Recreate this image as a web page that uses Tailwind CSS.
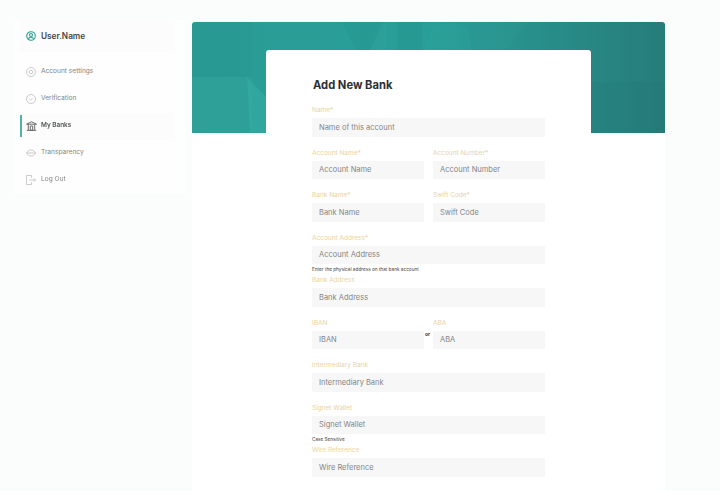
<!DOCTYPE html>
<html lang="en">
<head>
<meta charset="utf-8">
<script src="https://cdn.jsdelivr.net/npm/@tailwindcss/browser@4"></script>
</head>
<body class="m-0 bg-[#fbfcfc]">
<div class="w-[720px] h-[491px] overflow-hidden flex items-start font-['Inter','Liberation_Sans',sans-serif] blur-[0.5px]">
  <aside class="ml-[15px] mt-[20px] w-[170px] h-[175px] bg-[#fefefe] shrink-0 flex flex-col">
    <div class="h-[32px] shrink-0 ml-[5px] mr-[10px] pl-[6px] flex items-center gap-[5px] bg-[#fcfcfc] text-[8.250px] font-semibold text-[#45484b]">
      <svg class="w-[10px] h-[10px]" viewBox="0 0 10 10" fill="none" stroke="#2b9d92" stroke-width="1.100"><circle cx="5" cy="5" r="4.300"/><circle cx="5" cy="4" r="1.500"/><path d="M2.400 8c.5-1.300 1.500-1.800 2.600-1.800S7.100 6.700 7.600 8"/></svg>
      <span>User.Name</span>
    </div>
    <nav class="mt-[6.500px] flex flex-col shrink-0 text-[6.600px] text-[#858585]">
      <a class="h-[27px] pl-[11px] flex items-center gap-[5px]">
        <svg class="w-[10px] h-[10px]" viewBox="0 0 10 10" fill="none" stroke="#b5b5b5" stroke-width=".7"><circle cx="5" cy="5" r="4.500"/><circle cx="5" cy="5" r="1.800"/></svg>
        <span>Account settings</span>
      </a>
      <a class="h-[27px] pl-[11px] flex items-center gap-[5px]">
        <svg class="w-[10px] h-[10px]" viewBox="0 0 10 10" fill="none" stroke="#b5b5b5" stroke-width=".7"><circle cx="5" cy="5" r="4.500"/><path d="M3.400 5l1.200 1.200 2-2.200"/></svg>
        <span>Verification</span>
      </a>
      <a class="relative h-[27px] ml-[5px] mr-[10px] pl-[6px] flex items-center gap-[4px] bg-[#fcfcfc] text-[6.400px] font-semibold text-[#505254]">
        <span class="absolute left-0 top-[2.500px] w-[1.500px] h-[22px] bg-[#4db3a9]"></span>
        <svg class="w-[11px] h-[10px]" viewBox="0 0 11 10" fill="none" stroke="#5a5c5e" stroke-width=".9"><path d="M.5 3.200 5.500.8l5 2.400zM.8 9.400h9.400M2.300 3.500v5.500M8.700 3.500v5.500M4.300 5h2.400v4.200H4.300z"/></svg>
        <span>My Banks</span>
      </a>
      <a class="h-[27px] pl-[11px] flex items-center gap-[5px]">
        <svg class="w-[10px] h-[10px]" viewBox="0 0 10 10" fill="none" stroke="#b5b5b5" stroke-width=".7"><path d="M.4 5C2 2.500 3.500 2 5 2s3 .5 4.600 3C8 7.500 6.500 8 5 8S2 7.500.4 5z"/><path d="M.8 5h8.400"/></svg>
        <span>Transparency</span>
      </a>
      <a class="h-[27px] pl-[11px] flex items-center gap-[5px]">
        <svg class="w-[10px] h-[10px]" viewBox="0 0 10 10" fill="none" stroke="#b5b5b5" stroke-width=".7"><path d="M5.500 2.800V.5h-5v9h5V7.200M3.500 5h6M8 3.500 9.500 5 8 6.500"/></svg>
        <span>Log Out</span>
      </a>
    </nav>
  </aside>
  <main class="ml-[7px] mt-[22px] w-[473px] h-[469px] bg-white flex flex-col shrink-0">
    <div class="h-[111px] shrink-0 rounded-t-[3px] overflow-hidden bg-gradient-to-r from-[#2b9c96] via-[#299e98] to-[#267d7a]">
      <svg class="w-full h-full" viewBox="0 0 473 111" preserveAspectRatio="none">
        <path d="M0 55h60v56H0z" fill="#37ab9f" opacity=".25"/>
        <path d="M0 0h60v55H0z" fill="#238f88" opacity=".15"/>
        <path d="M55 55l19 20v36H58z" fill="#35b0a5" opacity=".5"/>
        <path d="M150 0h40l-12 28h-14z" fill="#218a84" opacity=".18"/>
        <path d="M193 0l-15 28h17V0z" fill="#37a99f" opacity=".2"/>
        <path d="M205 0h25v28h-25z" fill="#23877f" opacity=".18"/>
        <path d="M232 28l8-20q22-14 36 0l4 20z" fill="#2ea69c" opacity=".3"/>
        <path d="M285 0h50l-20 28h-25z" fill="#37a499" opacity=".15"/>
        <path d="M399 60h74v51h-74z" fill="#1f6f6d" opacity=".12"/>
      </svg>
    </div>
    <div class="relative -mt-[83px] ml-[74px] w-[325px] h-[441px] rounded-t-[3px] bg-white pl-[46px] pr-[46px] pt-[27px]">
      <h1 class="m-0 h-[16px] pl-[1px] leading-[16px] text-[11.200px] font-bold text-[#2c2f32]">Add New Bank</h1>
      <div class="mt-[11px] flex flex-col text-[7.500px] text-[#858585]">
        <div class="mb-[10px]">
          <label class="block h-[14px] leading-[12px] text-[6.500px] text-[#e8d4a4]">Name*</label>
          <div class="h-[18.500px] bg-[#f7f7f8] pl-[7px] flex items-center">Name of this account</div>
        </div>
        <div class="mb-[10px] grid grid-cols-2 gap-x-[9px]">
          <div>
            <label class="block h-[14px] leading-[12px] text-[6.500px] text-[#e8d4a4]">Account Name*</label>
            <div class="h-[18.500px] bg-[#f7f7f8] pl-[7px] flex items-center">Account Name</div>
          </div>
          <div>
            <label class="block h-[14px] leading-[12px] text-[6.500px] text-[#e8d4a4]">Account Number*</label>
            <div class="h-[18.500px] bg-[#f7f7f8] pl-[7px] flex items-center">Account Number</div>
          </div>
        </div>
        <div class="mb-[10px] grid grid-cols-2 gap-x-[9px]">
          <div>
            <label class="block h-[14px] leading-[12px] text-[6.500px] text-[#e8d4a4]">Bank Name*</label>
            <div class="h-[18.500px] bg-[#f7f7f8] pl-[7px] flex items-center">Bank Name</div>
          </div>
          <div>
            <label class="block h-[14px] leading-[12px] text-[6.500px] text-[#e8d4a4]">Swift Code*</label>
            <div class="h-[18.500px] bg-[#f7f7f8] pl-[7px] flex items-center">Swift Code</div>
          </div>
        </div>
        <div>
          <label class="block h-[14px] leading-[12px] text-[6.500px] text-[#e8d4a4]">Account Address*</label>
          <div class="h-[18.500px] bg-[#f7f7f8] pl-[7px] flex items-center">Account Address</div>
        </div>
        <p class="m-0 h-[10px] leading-[8px] pt-[1px] text-[4.700px] text-[#3a3e41]">Enter the physical address on that bank account</p>
        <div class="mb-[10px]">
          <label class="block h-[14px] leading-[12px] text-[6.500px] text-[#e8d4a4]">Bank Address</label>
          <div class="h-[18.500px] bg-[#f7f7f8] pl-[7px] flex items-center">Bank Address</div>
        </div>
        <div class="mb-[10px] grid grid-cols-2 gap-x-[9px]">
          <div>
            <label class="block h-[14px] leading-[12px] text-[6.500px] text-[#e8d4a4]">IBAN</label>
            <div class="h-[18.500px] bg-[#f7f7f8] pl-[7px] flex items-center">IBAN</div>
          </div>
          <div class="relative">
            <span class="absolute -left-[8px] top-[14px] text-[5px] font-bold text-[#3a3e41]">or</span>
            <label class="block h-[14px] leading-[12px] text-[6.500px] text-[#e8d4a4]">ABA</label>
            <div class="h-[18.500px] bg-[#f7f7f8] pl-[7px] flex items-center">ABA</div>
          </div>
        </div>
        <div class="mb-[10px]">
          <label class="block h-[14px] leading-[12px] text-[6.500px] text-[#e8d4a4]">Intermediary Bank</label>
          <div class="h-[18.500px] bg-[#f7f7f8] pl-[7px] flex items-center">Intermediary Bank</div>
        </div>
        <div>
          <label class="block h-[14px] leading-[12px] text-[6.500px] text-[#e8d4a4]">Signet Wallet</label>
          <div class="h-[18.500px] bg-[#f7f7f8] pl-[7px] flex items-center">Signet Wallet</div>
        </div>
        <p class="m-0 h-[10px] leading-[8px] pt-[1px] text-[4.700px] text-[#3a3e41]">Case Sensitive</p>
        <div>
          <label class="block h-[14px] leading-[12px] text-[6.500px] text-[#e8d4a4]">Wire Reference</label>
          <div class="h-[18.500px] bg-[#f7f7f8] pl-[7px] flex items-center">Wire Reference</div>
        </div>
      </div>
    </div>
  </main>
</div>
</body>
</html>
